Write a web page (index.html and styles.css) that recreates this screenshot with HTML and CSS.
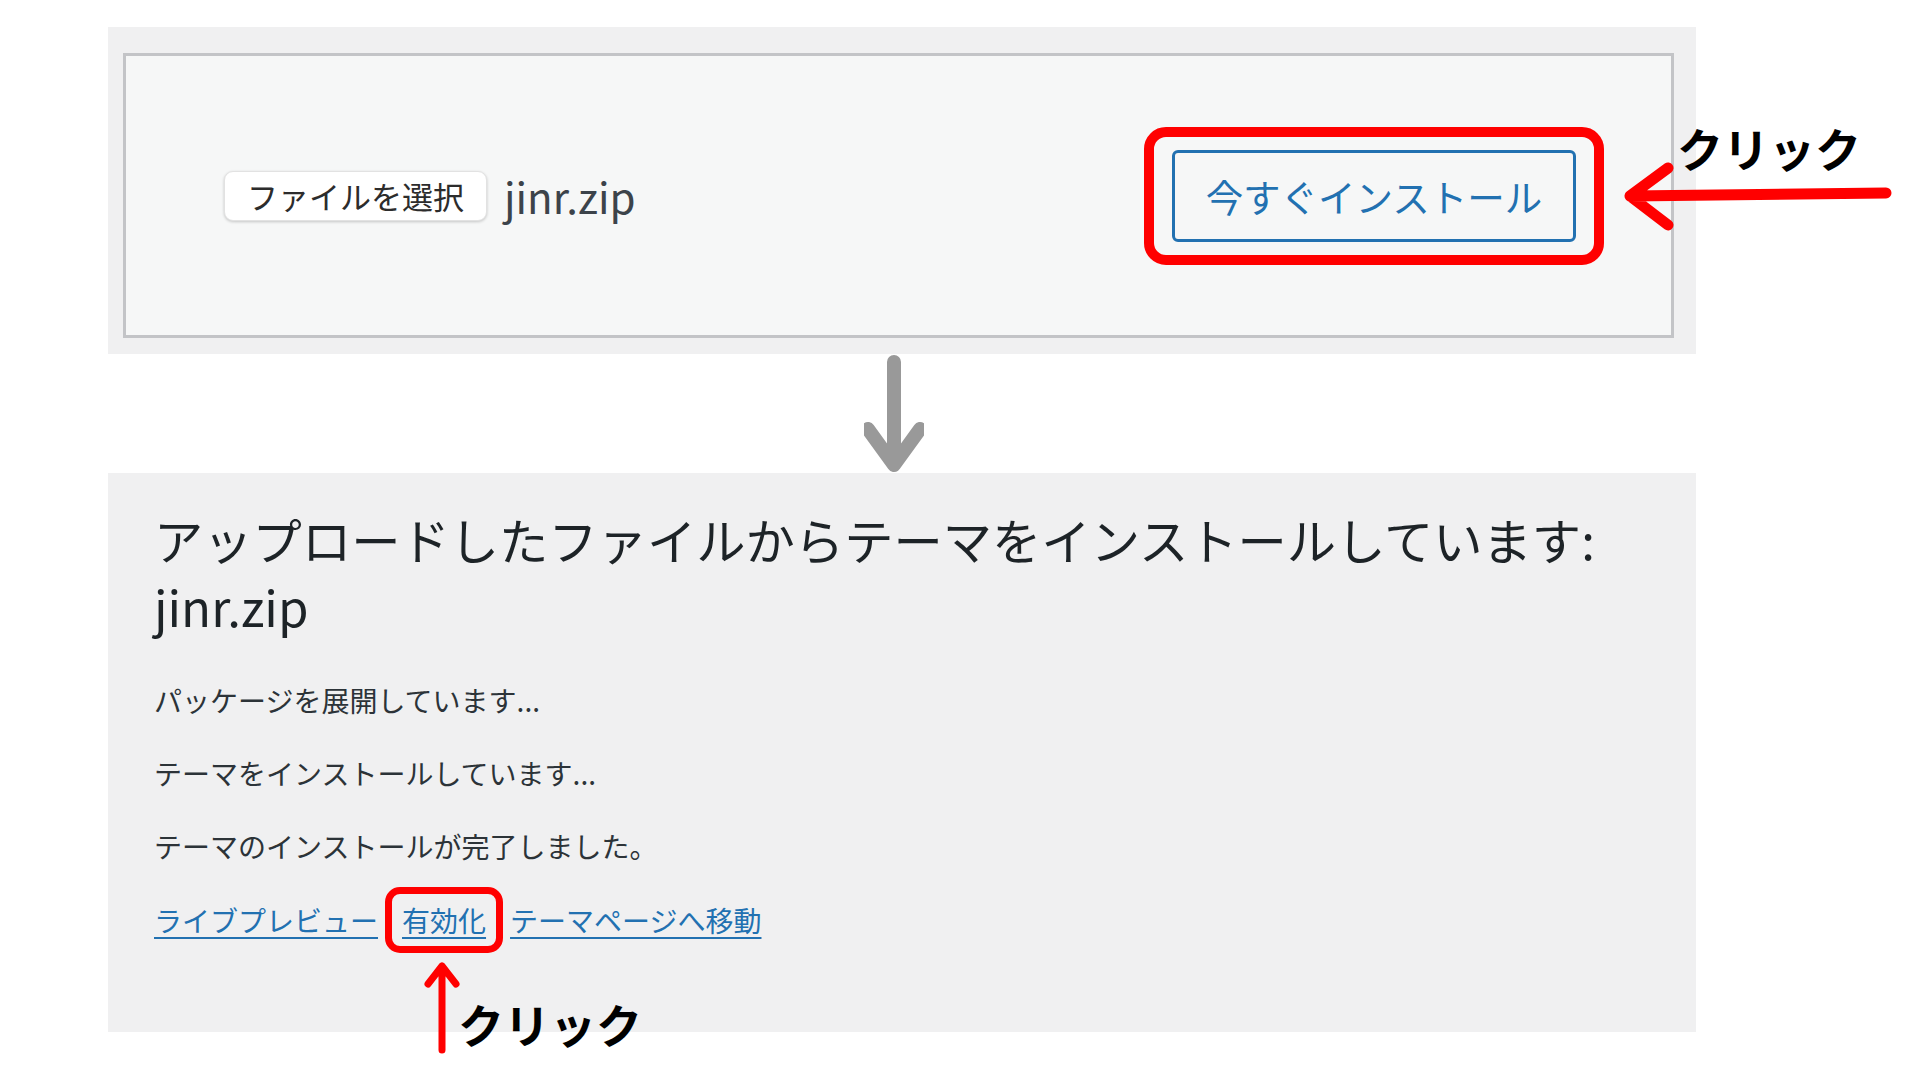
FILE: index.html
```html
<!DOCTYPE html>
<html lang="ja">
  <head>
    <meta charset="utf-8">
    <title>テーマのアップロード</title>
    <link rel="stylesheet" href="styles.css">
  </head>
  <body>
    <main class="page">
      <section class="upload-panel">
        <div class="upload-box">
          <button class="file-btn" type="button">ファイルを選択</button>
          <span class="file-name">jinr.zip</span>
          <div class="mark mark-install">
            <button class="install-btn" type="button">今すぐインストール</button>
          </div>
        </div>
        <!-- annotation -->
        <div class="note note-top">
          <svg class="note-arrow" width="272" height="72" viewBox="0 0 272 72">
            <path d="M266 33 L10 36 M48 8 L10 36 L48 65" fill="none" stroke="#ff0000" stroke-width="11" stroke-linecap="round" stroke-linejoin="round"/>
          </svg>
          <span class="note-text">クリック</span>
        </div>
      </section>

      <div class="flow">
        <svg width="60" height="119" viewBox="0 0 60 119">
          <path d="M30 8 L30 110 M4 75 L30 111 L56 75" fill="none" stroke="#999999" stroke-width="14" stroke-linecap="round" stroke-linejoin="round"/>
        </svg>
      </div>

      <section class="result-panel">
        <h2 class="result-title">アップロードしたファイルからテーマをインストールしています: jinr.zip</h2>
        <p class="step first">パッケージを展開しています...</p>
        <p class="step">テーマをインストールしています...</p>
        <p class="step">テーマのインストールが完了しました。</p>
        <div class="actions">
          <a href="#">ライブプレビュー</a>
          <span class="mark mark-link"><a href="#">有効化</a></span>
          <a href="#">テーマページへ移動</a>
        </div>
        <!-- annotation -->
        <div class="note note-bottom">
          <svg class="note-arrow" width="40" height="96" viewBox="0 0 40 96">
            <path d="M20 90 L20 6 M6 24 L20 6 L34 24" fill="none" stroke="#ff0000" stroke-width="7" stroke-linecap="round" stroke-linejoin="round"/>
          </svg>
          <span class="note-text">クリック</span>
        </div>
      </section>
    </main>
  </body>
</html>
```
FILE: styles.css
```css
* {
  margin: 0;
  padding: 0;
  box-sizing: border-box;
}

body {
  background: #fff;
  color: #1d2327;
  font-family: "Noto Sans CJK JP", "Noto Sans", sans-serif;
}

.page {
  width: 1696px;
  min-height: 1080px;
  padding: 27px 0 48px 108px;
}

/* top: upload form */

.upload-panel {
  position: relative;
  height: 327px;
  padding: 26px 22px 16px 15px;
  background: #f0f0f1;
}

.upload-box {
  display: flex;
  align-items: center;
  height: 285px;
  padding: 0 67px 0 98px;
  border: 3px solid #c3c4c7;
  background: #f6f7f7;
}

.file-btn {
  height: 50px;
  padding: 0 22px;
  border: 1px solid #e2e2e2;
  border-radius: 9px;
  background: #fff;
  box-shadow: 0 1px 3px rgba(0, 0, 0, 0.2);
  color: #2c2c2c;
  font: 31px/1 "Noto Sans CJK JP", sans-serif;
}

.file-name {
  margin-left: 17px;
  color: #3c434a;
  font-size: 42px;
  line-height: 1;
}

.mark {
  border: 10px solid #ff0000;
  border-radius: 22px;
}

.mark-install {
  margin-left: auto;
  padding: 13px 18px;
}

.install-btn {
  display: block;
  width: 404px;
  height: 92px;
  border: 3px solid #2271b1;
  border-radius: 6px;
  background: #f6f7f7;
  color: #2271b1;
  font: 37.5px/1 "Noto Sans CJK JP", sans-serif;
}

.note {
  position: absolute;
}

.note-text {
  position: absolute;
  color: #000;
  font-size: 46px;
  font-weight: 700;
  line-height: 1;
  white-space: nowrap;
}

.note-top {
  left: 1512px;
  top: 133px;
}

.note-top .note-arrow {
  display: block;
}

.note-top .note-text {
  left: 57px;
  top: -36px;
}

/* arrow between the two steps */

.flow {
  height: 119px;
  padding-left: 756px;
}

.flow svg {
  display: block;
}

/* bottom: install result */

.result-panel {
  position: relative;
  height: 559px;
  padding: 32px 46px;
  background: #f0f0f1;
}

.result-title {
  font-size: 49.3px;
  font-weight: 400;
  line-height: 67px;
  color: #1d2327;
}

.step {
  margin-top: 33px;
  font-size: 28px;
  line-height: 40px;
  color: #2c3338;
}

.step.first {
  margin-top: 41px;
}

.actions {
  display: flex;
  align-items: center;
  gap: 7px;
  margin-top: 21px;
}

.actions a {
  color: #2271b1;
  font-size: 28px;
  line-height: 40px;
  text-decoration: underline;
  text-underline-offset: 5px;
}

.mark-link {
  display: block;
  padding: 6px 10px;
  border-width: 7px;
  border-radius: 15px;
}

.note-bottom {
  left: 314px;
  top: 487px;
}

.note-bottom .note-text {
  left: 36px;
  top: 40px;
}
```
